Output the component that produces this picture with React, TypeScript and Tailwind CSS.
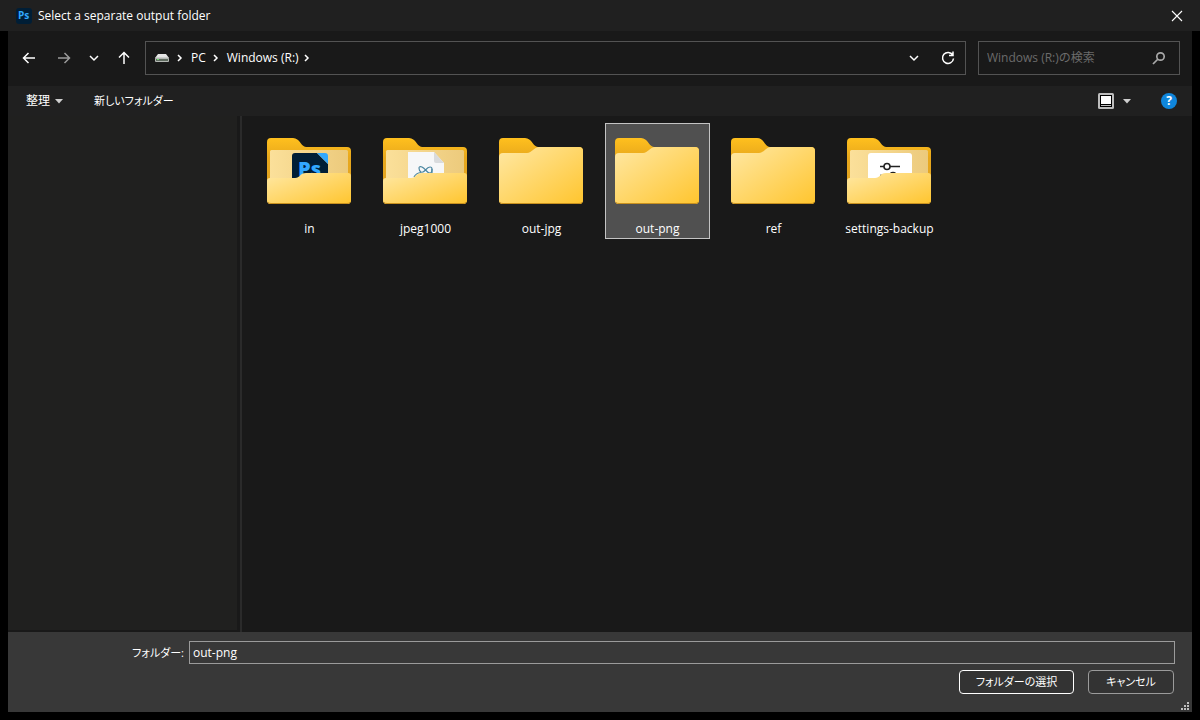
import type { ReactNode } from "react";

type Content = "photoshop" | "document" | "settings";

type FolderItem = {
  name: string;
  content?: Content;
  selected?: boolean;
};

const folders: FolderItem[] = [
  { name: "in", content: "photoshop" },
  { name: "jpeg1000", content: "document" },
  { name: "out-jpg" },
  { name: "out-png", selected: true },
  { name: "ref" },
  { name: "settings-backup", content: "settings" },
];

const FRONT_CLOSED = "M0 19Q0 15 4 15H28C33 15 35 9 40 9H80Q84 9 84 13V62Q84 66 80 66H4Q0 66 0 62Z";
const FRONT_OPEN = "M0 43Q0 40 3 40H28C33 40 33 35 39 35H81Q84 35 84 38V62Q84 66 80 66H4Q0 66 0 62Z";

function FolderContent({ content }: { content: Content }) {
  if (content === "photoshop") {
    return (
      <g>
        <path d="M28 15H50L61 26V50H25V18Q25 15 28 15Z" fill="#001e36" />
        <path d="M50 15H58Q61 15 61 18V26Z" fill="#31a8ff" />
        <text x="31" y="38" fontSize="20" fontWeight="800" fill="#31a8ff">
          Ps
        </text>
      </g>
    );
  }
  if (content === "document") {
    return (
      <g>
        <path d="M25 14H51L61 25V50H25Z" fill="#f6f7f8" />
        <path d="M51 14V23Q51 25 53 25H61Z" fill="#d9dbdd" />
        <g fill="none" stroke="#4a86a0" strokeWidth="1.2">
          <path d="M36 30Q36 28 39 29Q41 30 42.500 32Q45 29 47 29Q49 29 49 31Q49 35 47 35Q45 35 42.500 32Q40 35 38 34Q36 33 36 30Z" />
          <path d="M31 39Q33 35 38 34.500" />
          <path d="M49 31V36" />
        </g>
      </g>
    );
  }
  return (
    <g>
      <rect x="21" y="15" width="44" height="35" rx="3" fill="#fff" />
      <g fill="none" stroke="#222" strokeWidth="1.6">
        <path d="M33 28.500H37M43 28.500H53" />
        <circle cx="40" cy="28.500" r="3" />
        <circle cx="46" cy="37.500" r="3" />
        <path d="M33 37.500H43" />
      </g>
    </g>
  );
}

function FolderIcon({ content }: { content?: Content }) {
  return (
    <svg viewBox="0 0 84 66" className="mr-px h-[66px] w-[84px]" aria-hidden="true">
      <defs>
        <linearGradient id="folder-tab" x1="0" y1="0" x2="0" y2="1">
          <stop offset="0" stopColor="#ffc01e" />
          <stop offset="0.3" stopColor="#e8a81c" />
          <stop offset="1" stopColor="#dfa127" />
        </linearGradient>
        <linearGradient id="folder-front" x1="0" y1="0" x2="1" y2="1">
          <stop offset="0" stopColor="#ffe8a4" />
          <stop offset="1" stopColor="#ffc52e" />
        </linearGradient>
        <linearGradient id="folder-inner" x1="0" y1="0" x2="1" y2="0">
          <stop offset="0" stopColor="#fbe09a" />
          <stop offset="1" stopColor="#ecca7c" />
        </linearGradient>
      </defs>
      <path
        d="M0 4Q0 0 4 0H26C33 0 34 9 39 9H80Q84 9 84 13V62Q84 66 80 66H4Q0 66 0 62Z"
        fill="url(#folder-tab)"
      />
      {content && <rect x="3" y="12" width="78" height="40" rx="1.500" fill="url(#folder-inner)" />}
      {content && <FolderContent content={content} />}
      <path d={content ? FRONT_OPEN : FRONT_CLOSED} fill="url(#folder-front)" />
      <path d="M1 64.500Q2 65.500 4 65.500H80Q82 65.500 83 64.500" fill="none" stroke="#c8901e" />
    </svg>
  );
}

function Stroke({ d, className }: { d: string; className: string }) {
  return (
    <svg
      viewBox="0 0 16 16"
      className={className}
      fill="none"
      stroke="currentColor"
      strokeWidth="1.5"
      aria-hidden="true"
    >
      <path d={d} />
    </svg>
  );
}

const CHEVRON_DOWN = "M4 6L8 10L12 6";
const CHEVRON_RIGHT = "M6 5L9 8L6 11";

function NavButton({ label, children }: { label: string; children: ReactNode }) {
  return (
    <button type="button" aria-label={label} className="flex items-center justify-center">
      {children}
    </button>
  );
}

function Triangle() {
  return (
    <svg viewBox="0 0 8 5" className="h-[5px] w-2" aria-hidden="true">
      <path d="M0 0H8L4 4.500Z" fill="#cfcfcf" />
    </svg>
  );
}

function TitleBar() {
  return (
    <header className="flex h-[31px] items-center bg-[#202020] px-4">
      <svg viewBox="0 0 16 16" className="size-4" aria-hidden="true">
        <rect width="16" height="16" rx="3" fill="#001e36" />
        <text x="2" y="11" fontSize="10" fontWeight="700" fill="#31a8ff">
          Ps
        </text>
      </svg>
      <h1 className="ml-1.5 flex-1">Select a separate output folder</h1>
      <button type="button" aria-label="Close">
        <svg viewBox="0 0 14 14" className="size-3.5" stroke="#fff" strokeWidth="1.1" aria-hidden="true">
          <path d="M2 2L12 12M12 2L2 12" />
        </svg>
      </button>
    </header>
  );
}

function AddressBar() {
  return (
    <div className="flex h-[34px] flex-1 items-center border border-[#535353] pr-[9px] pl-2">
      <svg viewBox="0 0 16 10" className="h-2.5 w-4" aria-hidden="true">
        <path d="M4 1H12L15 5H1Z" fill="#e6e6e6" />
        <rect x="1" y="4.500" width="14" height="4.500" rx="1" fill="#b4b8b4" />
        <rect x="2" y="6" width="12" height="2" fill="#5e6a5e" />
        <rect x="3" y="6" width="2" height="1" fill="#6bdc6b" />
      </svg>
      <Stroke d={CHEVRON_RIGHT} className="ml-0.5 size-4" />
      <button type="button" className="ml-[3px]">PC</button>
      <Stroke d={CHEVRON_RIGHT} className="ml-0.5 size-4" />
      <button type="button" className="ml-[3px]">Windows (R:)</button>
      <Stroke d={CHEVRON_RIGHT} className="size-4" />
      <div className="ml-auto flex items-center gap-[18px]">
        <NavButton label="Previous locations">
          <Stroke d={CHEVRON_DOWN} className="size-4" />
        </NavButton>
        <NavButton label="Refresh">
          <Stroke d="M12.700 5A5.500 5.500 0 1 0 13.500 8.500M13 1.500V5.500H9" className="size-4" />
        </NavButton>
      </div>
    </div>
  );
}

function NavBar() {
  return (
    <nav className="flex items-center bg-[#191919] pt-2.5 pr-3 pb-[11px] pl-[13px]">
      <div className="flex w-[124px] items-center">
        <NavButton label="Back">
          <Stroke d="M14 8H2.500M7.500 3L2.500 8L7.500 13" className="size-4" />
        </NavButton>
        <span className="ml-[19px] flex text-[#9a9a9a]">
          <NavButton label="Forward">
            <Stroke d="M2 8H13.500M8.500 3L13.500 8L8.500 13" className="size-4" />
          </NavButton>
        </span>
        <span className="ml-3.5 flex">
          <NavButton label="Recent locations">
            <Stroke d={CHEVRON_DOWN} className="size-4" />
          </NavButton>
        </span>
        <span className="ml-3.5 flex">
          <NavButton label="Up">
            <Stroke d="M8 14V2.500M3 7.500L8 2.500L13 7.500" className="size-4" />
          </NavButton>
        </span>
      </div>
      <AddressBar />
      <label className="ml-3 flex h-[34px] w-[202px] items-center border border-[#535353] pr-3 pl-2">
        <input
          type="search"
          aria-label="検索"
          placeholder="Windows (R:)の検索"
          className="min-w-0 flex-1 bg-transparent outline-none placeholder:text-[#6b6b6b]"
        />
        <svg
          viewBox="0 0 16 16"
          className="size-4"
          fill="none"
          stroke="#a8a8a8"
          strokeWidth="1.7"
          aria-hidden="true"
        >
          <circle cx="9.500" cy="6.500" r="3.700" />
          <path d="M7 9L2 14" />
        </svg>
      </label>
    </nav>
  );
}

function Toolbar() {
  return (
    <div className="flex h-[30px] items-center bg-[#202020] pr-[15px] pl-[18px]">
      <button type="button" className="flex items-center gap-[5px]">
        整理
        <Triangle />
      </button>
      <button type="button" className="ml-[31px] text-[11px] [font-feature-settings:'palt']">
        新しいフォルダー
      </button>
      <button type="button" aria-label="View" className="ml-auto flex items-center gap-[9px]">
        <svg viewBox="0 0 16 16" className="size-4" aria-hidden="true">
          <rect width="16" height="16" rx="1.500" fill="#bdbdbd" />
          <rect x="2" y="2" width="12" height="12" fill="#000" />
          <rect x="3" y="3" width="10" height="8" fill="#fff" />
          <rect x="3" y="12" width="10" height="1" fill="#bdbdbd" />
        </svg>
        <Triangle />
      </button>
      <button
        type="button"
        aria-label="Help"
        className="ml-[30px] flex size-4 items-center justify-center rounded-full bg-[#0f86dc] font-bold"
      >
        ?
      </button>
    </div>
  );
}

function FolderTile({ item }: { item: FolderItem }) {
  return (
    <button
      type="button"
      aria-pressed={Boolean(item.selected)}
      className={
        item.selected
          ? "flex h-[116px] w-[105px] flex-col items-center border border-[#c4c4c4] bg-[#505050] pt-3.5"
          : "flex h-[116px] w-[105px] flex-col items-center border border-transparent pt-3.5"
      }
    >
      <FolderIcon content={item.content} />
      <span className="mt-[17px] whitespace-nowrap">{item.name}</span>
    </button>
  );
}

function Footer() {
  return (
    <footer className="flex h-20 flex-col gap-1.5 bg-[#383838] pt-[9px]">
      <div className="flex items-center pr-[17px]">
        <label
          htmlFor="folder"
          className="w-[181px] pr-[5px] text-right text-[11px] [font-feature-settings:'palt']"
        >
          フォルダー:
        </label>
        <input
          id="folder"
          defaultValue="out-png"
          className="h-[23px] min-w-0 flex-1 border border-[#9b9b9b] bg-[#383838] px-[3px] outline-none"
        />
      </div>
      <div className="flex justify-end gap-3.5 pr-[18px] text-[11px] [font-feature-settings:'palt']">
        <button type="button" className="h-6 w-[115px] rounded border border-white bg-[#333333]">
          フォルダーの選択
        </button>
        <button type="button" className="h-6 w-[86px] rounded border border-[#9b9b9b] bg-[#333333]">
          キャンセル
        </button>
      </div>
      <svg viewBox="0 0 8 8" className="mt-0.5 mr-[3px] size-2 self-end" fill="#bfbfbf" aria-hidden="true">
        <path d="M6 0h2v2h-2zM3 3h2v2h-2zM6 3h2v2h-2zM0 6h2v2h-2zM3 6h2v2h-2zM6 6h2v2h-2z" />
      </svg>
    </footer>
  );
}

export default function App() {
  return (
    <div className="flex min-h-screen flex-col bg-black font-['Open_Sans','Noto_Sans_CJK_JP',sans-serif] text-[12px] leading-4 text-white">
      <TitleBar />
      <div className="mx-2 mb-2 flex flex-1 flex-col">
        <NavBar />
        <Toolbar />
        <div className="flex flex-1 bg-[#191919]">
          <aside className="mb-0.5 w-[229px] bg-[#20201f]" />
          <div className="ml-[3px] w-0.5 bg-[#2a2a2a]" />
          <main className="flex flex-1 flex-wrap content-start gap-[11px] pt-[7px] pl-[15px]">
            {folders.map((item) => (
              <FolderTile key={item.name} item={item} />
            ))}
          </main>
        </div>
        <Footer />
      </div>
    </div>
  );
}
